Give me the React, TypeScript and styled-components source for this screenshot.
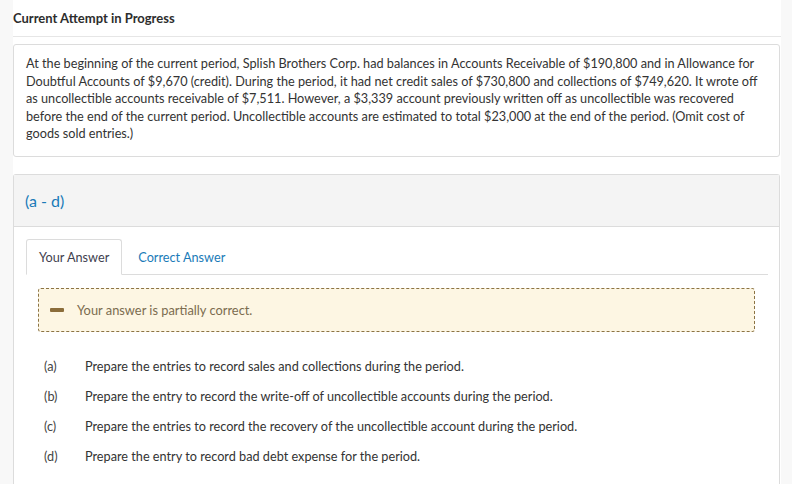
import React from "react";
import styled, { createGlobalStyle } from "styled-components";

const Global = createGlobalStyle`
  html, body { margin: 0; padding: 0; }
  body {
    background: #f8f8f8;
    font-family: Lato, "Open Sans", "Liberation Sans", sans-serif;
    color: #333;
    -webkit-font-smoothing: antialiased;
  }
`;

const Page = styled.div`
  margin-left: 13px;
  width: 768px;
  height: 484px;
  overflow: hidden;
  background: #fff;
  display: flex;
  flex-direction: column;
`;

const Title = styled.h1`
  margin: 0;
  padding-top: 8px;
  font-size: 13px;
  line-height: 20px;
  font-weight: 700;
  color: #2d2d2d;
`;

const Rule = styled.hr`
  margin: 8px 0 7px;
  border: 0;
  border-top: 1px solid #e6e6e6;
  height: 0;
  flex: none;
`;

const QuestionBox = styled.div`
  margin-right: 1px;
  border: 1px solid #dcdcdc;
  border-radius: 3px;
  padding: 10px 12px 13px;
  font-size: 12.7px;
  line-height: 17.6px;
  color: #333;
`;

const PartBox = styled.section`
  flex: 1;
  margin-top: 17px;
  margin-right: 1px;
  border: 1px solid #dcdcdc;
  border-bottom: none;
  border-radius: 3px 3px 0 0;
`;

const PartHeader = styled.div`
  background: #f4f4f4;
  border-bottom: 1px solid #dcdcdc;
  height: 51px;
  display: flex;
  align-items: center;
  padding-left: 11px;
  font-size: 16px;
  color: #1a7bb8;
`;

const PartBody = styled.div`
  padding: 12px 11px 0 12px;
`;

const Tabs = styled.div`
  display: flex;
  align-items: flex-end;
  border-bottom: 1px solid #dcdcdc;
  height: 35px;
`;

const Tab = styled.div<{ $active?: boolean }>`
  box-sizing: border-box;
  display: flex;
  align-items: center;
  padding: 0 12px;
  margin-right: 3px;
  font-size: 12.7px;
  margin-bottom: -1px;
  height: 36px;
  border: 1px solid ${(p) => (p.$active ? "#dcdcdc" : "transparent")};
  border-bottom-color: ${(p) => (p.$active ? "#fff" : "transparent")};
  border-radius: 3px 3px 0 0;
  background: ${(p) => (p.$active ? "#fff" : "transparent")};
  color: ${(p) => (p.$active ? "#3f3f4f" : "#1a7bb8")};
`;

const Alert = styled.div`
  margin: 13px 13px 0 12px;
  height: 44px;
  box-sizing: border-box;
  border: 1px dashed #8c7444;
  border-radius: 3px;
  background: #fdf6e3;
  display: flex;
  align-items: center;
  padding-left: 11px;
  font-size: 12.85px;
  color: #7b6c4f;
`;

const MinusBar = styled.span`
  width: 14px;
  height: 4px;
  border-radius: 1px;
  background: #8b6d3a;
  margin-right: 13px;
`;

const List = styled.div`
  padding: 19px 0 0 18px;
`;

const Item = styled.div`
  display: flex;
  height: 30px;
  align-items: center;
  font-size: 12.7px;
  color: #333;
`;

const Label = styled.span`
  width: 41px;
  flex: none;
  color: #444;
`;

const items: [string, string][] = [
  ["(a)", "Prepare the entries to record sales and collections during the period."],
  ["(b)", "Prepare the entry to record the write-off of uncollectible accounts during the period."],
  ["(c)", "Prepare the entries to record the recovery of the uncollectible account during the period."],
  ["(d)", "Prepare the entry to record bad debt expense for the period."],
];

export default function App() {
  return (
    <>
      <Global />
      <Page>
        <Title>Current Attempt in Progress</Title>
        <Rule />
        <QuestionBox>
          At the beginning of the current period, Splish Brothers Corp. had balances in Accounts Receivable of $190,800 and in Allowance for Doubtful Accounts of $9,670 (credit). During the period, it had net credit sales of $730,800 and collections of $749,620. It wrote off as uncollectible accounts receivable of $7,511. However, a $3,339 account previously written off as uncollectible was recovered before the end of the current period. Uncollectible accounts are estimated to total $23,000 at the end of the period. (Omit cost of goods sold entries.)
        </QuestionBox>
        <PartBox>
          <PartHeader>(a - d)</PartHeader>
          <PartBody>
            <Tabs>
              <Tab $active>Your Answer</Tab>
              <Tab>Correct Answer</Tab>
            </Tabs>
            <Alert>
              <MinusBar />
              Your answer is partially correct.
            </Alert>
            <List>
              {items.map(([l, t]) => (
                <Item key={l}>
                  <Label>{l}</Label>
                  {t}
                </Item>
              ))}
            </List>
          </PartBody>
        </PartBox>
      </Page>
    </>
  );
}
